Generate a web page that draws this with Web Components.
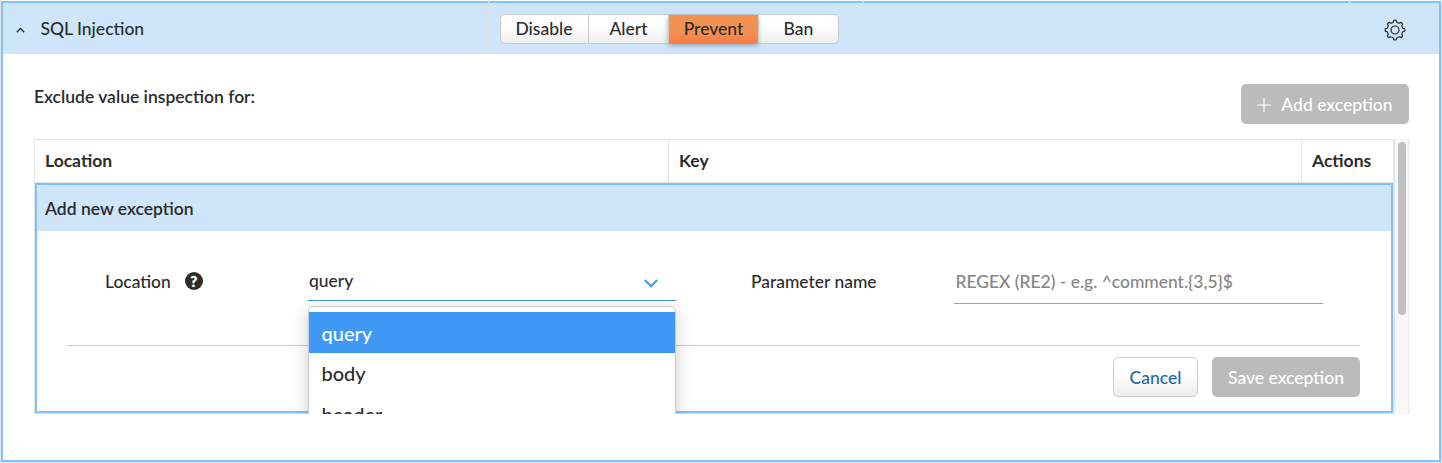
<!DOCTYPE html>
<html lang="en">
<head>
<meta charset="utf-8">
<title>SQL Injection</title>
<style>
html,body{margin:0;height:463px;overflow:hidden;background:#fff}
body{font-family:Lato,"Liberation Sans",sans-serif;font-size:17.5px;font-weight:500;color:#2c2c2c;line-height:24px}
</style>
</head>
<body>
<rule-panel>
  <rule-header slot="header" label="SQL Injection">
    <effect-switch slot="effect" options="Disable,Alert,Prevent,Ban" selected="Prevent"></effect-switch>
  </rule-header>
  <section-bar>
    <span>Exclude value inspection for:</span>
    <ui-button slot="action" variant="muted" icon="plus" style="--w:168px">Add exception</ui-button>
  </section-bar>
  <exception-table>
    <exception-editor heading="Add new exception">
      <form-field label="Location" help>
        <select-field value="query" options="query,body,header"></select-field>
      </form-field>
      <form-field label="Parameter name">
        <text-field placeholder="REGEX (RE2) - e.g. ^comment.{3,5}$"></text-field>
      </form-field>
      <ui-button slot="actions" variant="light" style="--w:85px">Cancel</ui-button>
      <ui-button slot="actions" variant="muted" style="--w:148px">Save exception</ui-button>
    </exception-editor>
  </exception-table>
</rule-panel>
<script>
class Base extends HTMLElement {
  constructor(){ super(); this.attachShadow({mode:'open'}); }
  connectedCallback(){ this.shadowRoot.innerHTML = '<style>*{box-sizing:border-box}:host{box-sizing:border-box}</style>' + this.view(); }
  attr(n){ return this.getAttribute(n) || ''; }
}
customElements.define('rule-panel', class extends Base {
  view(){ return `<style>
    :host{display:block;width:1442px;height:463px;padding-top:1px;border:solid #e4e4e6;border-width:0 1px 1px}
    .frame{height:461px;border:2px solid #7fc2fd;background:#fff;display:flex;flex-direction:column}
    .body{padding:30px 30px 0 31px}
  </style><div class="frame"><slot name="header"></slot><div class="body"><slot></slot></div></div>`; }
});
customElements.define('rule-header', class extends Base {
  view(){ return `<style>
    :host{display:grid;grid-template-columns:485px 375px 486px 1fr;height:51px;background:#cfe5fa;flex:none}
    .cell{display:flex;align-items:center;position:relative;padding-left:1px}
    .cell + .cell::before{content:"";position:absolute;left:0;top:-3px;bottom:0;width:1px;background:#dfe3e7}
    .cell:first-of-type{padding-left:13px;gap:13.5px}
    .name{margin-left:2px}
    .cell.effect{padding-left:12px}
    .cell.gear{padding:3px 0 0 34.5px}
    svg{display:block;fill:none;stroke:#2c2c2c}
  </style>
  <div class="cell"><svg width="9" height="6" viewBox="0 0 9 6" style="margin-top:3px"><path d="M.8 5.3 4.5 1.5 8.2 5.3" stroke-width="1.25"/></svg><span class="name">${this.attr('label')}</span></div>
  <div class="cell effect"><slot name="effect"></slot></div>
  <div class="cell"></div>
  <div class="cell gear"><svg width="22" height="22" viewBox="0 0 22 22" stroke-width="1.2" stroke-linejoin="round">${gearPath()}<circle cx="11" cy="11" r="4"/></svg></div>`; }
});
function gearPath(){
  const teeth = 8, c = 11, pts = [];
  const at = (r, a) => `${(c + r*Math.cos(a)).toFixed(2)} ${(c + r*Math.sin(a)).toFixed(2)}`;
  const step = 2*Math.PI/teeth;
  for (let i = 0; i < teeth; i++) {
    const a = i*step - Math.PI/2;
    pts.push((i ? 'L' : 'M') + at(9.5, a-.14), 'Q' + at(10.4, a) + ' ' + at(9.5, a+.14),
      'L' + at(8.1, a+.2), 'Q' + at(7.5, a+step/2) + ' ' + at(8.1, a+step-.2));
  }
  return `<path d="${pts.join('')}Z"/>`;
}
customElements.define('effect-switch', class extends Base {
  view(){
    const widths = [87,80,90,80], sel = this.attr('selected');
    return `<style>
    :host{display:flex;height:30px;width:339px;border:1px solid #ccc;border-radius:5px;background:linear-gradient(#fff 40%,#ededed)}
    span{display:flex;align-items:center;justify-content:center;border-left:1px solid #ccc}
    span:first-of-type{border-left:0;padding-right:1px}
    .on{background:linear-gradient(#f19253 55%,#f97c45) padding-box;box-shadow:0 2px 5px #0005}
  </style>` + this.attr('options').split(',').map((o,i)=>`<span class="${o===sel?'on':''}" style="width:${widths[i]}px">${o}</span>`).join(''); }
});
customElements.define('section-bar', class extends Base {
  view(){ return `<style>
    :host{display:flex;justify-content:space-between;height:55px;font-weight:600}
    .t{padding-top:1px}
  </style><div class="t"><slot></slot></div><slot name="action"></slot>`; }
});
customElements.define('ui-button', class extends Base {
  view(){
    const icon = this.attr('icon') === 'plus' ? '<svg width="14" height="14" viewBox="0 0 14 14"><path d="M7 0v14M0 7h14" stroke="currentColor" stroke-width="1.2"/></svg>' : '';
    return `<style>
    :host{display:flex;width:var(--w);height:40px;border-radius:5px;align-items:center;justify-content:center;gap:10px;flex:none;padding-top:2px;font-weight:500;white-space:nowrap}
    :host([variant=muted]){background:#bbb;color:#fff}
    :host([variant=light]){background:linear-gradient(#fff 40%,#ededed);border:1px solid #ccc;color:#2369ab}
    svg{display:block;flex:none}
  </style>${icon}<span><slot></slot></span>`; }
});
customElements.define('exception-table', class extends Base {
  view(){ return `<style>
    :host{display:flex;height:275px;width:1375px;overflow:hidden}
    .grid{width:1361px;border:1px solid #e4e4e6;border-right-width:2px;display:flex;flex-direction:column}
    .head{display:grid;grid-template-columns:633px 633px 1fr;height:43px;border-bottom:1px solid #e4e4e6;font-weight:700}
    .head span{display:flex;align-items:center;padding-left:10px;border-left:1px solid #e4e4e6}
    .head span:first-child{border-left:0}
    .bar{width:14px;background:#f8f8f8;border-right:1px solid #e8e8e8;padding:3px 2px 0 3px}
    .thumb{width:8px;height:173px;border-radius:4px;background:#c1c1c1}
  </style>
  <div class="grid"><div class="head"><span>Location</span><span>Key</span><span>Actions</span></div><slot></slot></div>
  <div class="bar"><div class="thumb"></div></div>`; }
});
customElements.define('exception-editor', class extends Base {
  view(){ return `<style>
    :host{display:block;height:230px;border:2px solid #7fc2fd}
    .title{height:46px;background:#cfe5fa;display:flex;align-items:center;padding:2px 0 0 8px;font-weight:600}
    .fields{height:114px;padding:38px 0 0 68px;display:flex;gap:75px}
    .foot{margin:0 31px 0 30px;border-top:1px solid #c9cbd0;padding-top:11px;display:flex;justify-content:flex-end;gap:14px}
  </style>
  <div class="title">${this.attr('heading')}</div>
  <div class="fields"><slot></slot></div>
  <div class="foot"><slot name="actions"></slot></div>`; }
});
customElements.define('form-field', class extends Base {
  view(){ return `<style>
    :host{display:flex;flex:none;font-size:17.45px}
    .label{width:var(--label,203px);display:flex;gap:14px;height:25px;align-items:center}
    .q{width:18px;height:18px;margin-top:-1px;border-radius:50%;background:#2c2c2c;color:#fff;font-size:15px;font-weight:900;line-height:18px;text-align:center;-webkit-text-stroke:.4px #fff}
  </style><div class="label"><span>${this.attr('label')}</span>${this.hasAttribute('help')?'<span class="q">?</span>':''}</div><slot></slot>`; }
});
customElements.define('select-field', class extends Base {
  view(){ const v = this.attr('value'); return `<style>
    :host{display:block;position:relative;width:368px;height:32px}
    .value{height:32px;border-bottom:1px solid #3f98f3;display:flex;justify-content:space-between;padding:0 18px 0 1px}
    svg{display:block;margin-top:10px}
    .menu{position:absolute;z-index:2;left:0;top:37px;width:368px;height:150px;padding-top:5px;background:#fff;border:1px solid #c9cdd2;border-radius:5px;box-shadow:0 5px 18px #0003;font-size:20px}
    .item{height:41px;padding:0 0 2px 12.5px;display:flex;align-items:center}
    .on{background:#3f98f3;color:#fff;padding:1px 0 0 12.5px}
  </style>
  <div class="value"><span>${v}</span><svg width="14" height="9" viewBox="0 0 14 9"><path d="M.8 1 7 7.3 13.2 1" fill="none" stroke="#3f98f3" stroke-width="2"/></svg></div>
  <div class="menu">${this.attr('options').split(',').map(o=>`<div class="item ${o===v?'on':''}">${o}</div>`).join('')}</div>`; }
});
customElements.define('text-field', class extends Base {
  view(){ return `<style>
    :host{display:block;width:369px;height:35px;border-bottom:1px solid #9aa3ab;color:#858585;padding:1px 0 0 1.5px;white-space:nowrap}
  </style>${this.attr('placeholder')}`; }
});
</script>
</body>
</html>
